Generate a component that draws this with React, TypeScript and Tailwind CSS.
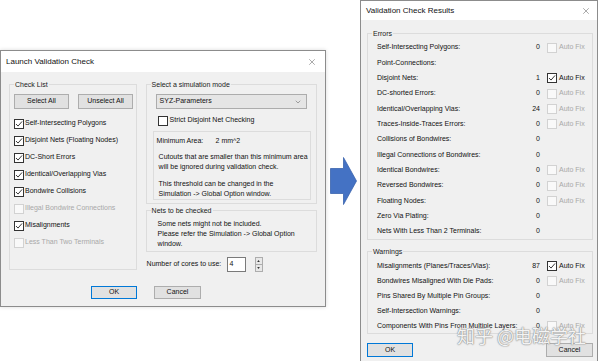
import { X, ChevronDown } from 'lucide-react';
import clsx from 'clsx';

type Box = { checked?: boolean; disabled?: boolean };

function CheckBox({ checked, disabled }: Box) {
  return (
    <span
      className={clsx(
        'flex h-[10px] w-[10px] shrink-0 items-center justify-center border',
        disabled ? 'border-[#d2d2d2] bg-[#f9f9f9]' : 'border-[#333] bg-white'
      )}
    >
      {checked && (
        <svg viewBox="0 0 10 10" className="h-[8px] w-[8px]">
          <path d="M1.2 5 L3.8 7.6 L8.8 1.8" stroke="#1b1b1b" strokeWidth="1.1" fill="none" />
        </svg>
      )}
    </span>
  );
}

function Group({ label, className, children }: { label: string; className?: string; children?: React.ReactNode }) {
  return (
    <div className={clsx('relative border border-[#dcdcdc]', className)}>
      <span className="absolute -top-[5px] left-[4px] bg-[#f0f0f0] px-[1px] text-[7px] leading-[9px] text-[#1a1a1a]">
        {label}
      </span>
      {children}
    </div>
  );
}

function Button({ label, primary, className }: { label: string; primary?: boolean; className?: string }) {
  return (
    <div
      className={clsx(
        'flex items-center justify-center bg-[#e1e1e1] text-[7px] text-[#111]',
        primary ? 'border border-[#0078d7]' : 'border border-[#adadad]',
        className
      )}
    >
      {label}
    </div>
  );
}

const checkList: [string, boolean, boolean][] = [
  ['Self-Intersecting Polygons', true, false],
  ['Disjoint Nets (Floating Nodes)', true, false],
  ['DC-Short Errors', true, false],
  ['Identical/Overlapping Vias', true, false],
  ['Bondwire Collisions', true, false],
  ['Illegal Bondwire Connections', false, true],
  ['Misalignments', true, false],
  ['Less Than Two Terminals', false, true],
];

// 0 = no auto fix, 1 = disabled auto fix, 2 = checked auto fix
const errors: [string, string, number][] = [
  ['Self-Intersecting Polygons:', '0', 1],
  ['Point-Connections:', '', 0],
  ['Disjoint Nets:', '1', 2],
  ['DC-shorted Errors:', '0', 1],
  ['Identical/Overlapping Vias:', '24', 1],
  ['Traces-Inside-Traces Errors:', '0', 1],
  ['Collisions of Bondwires:', '0', 0],
  ['Illegal Connections of Bondwires:', '0', 0],
  ['Identical Bondwires:', '0', 1],
  ['Reversed Bondwires:', '0', 1],
  ['Floating Nodes:', '0', 1],
  ['Zero Via Plating:', '0', 0],
  ['Nets With Less Than 2 Terminals:', '0', 0],
];

const warnings: [string, string, number][] = [
  ['Misalignments (Planes/Traces/Vias):', '87', 2],
  ['Bondwires Misaligned With Die Pads:', '0', 1],
  ['Pins Shared By Multiple Pin Groups:', '0', 0],
  ['Self-Intersection Warnings:', '0', 0],
  ['Components With Pins From Multiple Layers:', '0', 1],
];

function ResultRow({ row, h }: { row: [string, string, number]; h: string }) {
  const [label, count, fix] = row;
  return (
    <div className={clsx('flex items-center pl-[9px] text-[7px] text-[#111]', h)}>
      <span className="flex-1">{label}</span>
      <span className="mr-[7px]">{count}</span>
      <div className="flex w-[45px] items-center gap-[2px]">
        {fix > 0 && (
          <>
            <CheckBox checked={fix === 2} disabled={fix === 1} />
            <span className={fix === 2 ? 'text-[#111]' : 'text-[#a8a8a8]'}>Auto Fix</span>
          </>
        )}
      </div>
    </div>
  );
}

function LaunchDialog() {
  return (
    <div className="flex h-[257px] w-[326px] flex-col border border-[#8c8c8c] bg-[#f0f0f0] shadow-[0_0_4px_rgba(0,0,0,0.15)]">
      <div className="flex h-[21px] items-center justify-between bg-white pl-[5px] pr-[8px]">
        <span className="text-[8px] text-[#111]">Launch Validation Check</span>
        <X size={10} strokeWidth={1} className="text-[#333]" />
      </div>
      <div className="flex flex-1 flex-col px-[8px] pt-[12px]">
        <div className="flex gap-[9px]">
          <Group label="Check List" className="h-[186px] w-[128px] pl-[4px] pt-[9px]">
            <div className="flex gap-[9px]">
              <Button label="Select All" className="h-[15px] w-[55px]" />
              <Button label="Unselect All" className="h-[15px] w-[55px]" />
            </div>
            <div className="mt-[6px] flex flex-col">
              {checkList.map(([label, checked, disabled]) => (
                <div key={label} className="flex h-[17px] items-center gap-[1px]">
                  <CheckBox checked={checked} disabled={disabled} />
                  <span className={clsx('text-[7px]', disabled ? 'text-[#a8a8a8]' : 'text-[#111]')}>{label}</span>
                </div>
              ))}
            </div>
          </Group>

          <div className="flex w-[172px] flex-col">
            <Group label="Select a simulation mode" className="h-[120px] pt-[9px]">
              <div className="ml-[9px] flex h-[15px] w-[151px] items-center justify-between border border-[#acacac] bg-[#e5e5e5] pl-[3px] pr-[4px]">
                <span className="text-[7px] text-[#111]">SYZ-Parameters</span>
                <ChevronDown size={8} strokeWidth={1.5} className="text-[#555]" />
              </div>
              <div className="ml-[11px] mt-[6px] flex h-[11px] items-center gap-[2px]">
                <CheckBox />
                <span className="text-[7px] text-[#111]">Strict Disjoint Net Checking</span>
              </div>
              <div className="ml-[6px] mt-[5px] h-[69px] w-[158px] border border-[#dcdcdc] pl-[3px] pt-[4px] text-[7px] leading-[10px] text-[#111]">
                <div className="flex">
                  <span className="w-[59px]">Minimum Area:</span>
                  <span>2 mm^2</span>
                </div>
                <div className="ml-[2px] mt-[6px]">
                  Cutouts that are smaller than this minimum area
                  <br />
                  will be ignored during validation check.
                </div>
                <div className="ml-[2px] mt-[7px]">
                  This threshold can be changed in the
                  <br />
                  Simulation -&gt; Global Option window.
                </div>
              </div>
            </Group>
            <Group label="Nets to be checked" className="mt-[6px] h-[42px] pl-[11px] pt-[8px] text-[7px] leading-[10px] text-[#111]">
              Some nets might not be included.
              <br />
              Please refer the Simulation -&gt; Global Option
              <br />
              window.
            </Group>
            <div className="mt-[5px] flex h-[15px] items-center pl-[1px]">
              <span className="w-[80px] text-[7px] text-[#111]">Number of cores to use:</span>
              <div className="flex h-[15px] w-[19px] items-center border border-[#7a7a7a] bg-white pl-[2px] text-[7px] text-[#111]">
                4
              </div>
              <div className="ml-[9px] flex h-[15px] w-[8px] flex-col border border-[#adadad] bg-[#e8e8e8]">
                <div className="flex flex-1 items-center justify-center border-b border-[#adadad]">
                  <svg viewBox="0 0 4 3" className="h-[2px] w-[3px]">
                    <path d="M0 3 L2 0 L4 3 Z" fill="#333" />
                  </svg>
                </div>
                <div className="flex flex-1 items-center justify-center">
                  <svg viewBox="0 0 4 3" className="h-[2px] w-[3px]">
                    <path d="M0 0 L2 3 L4 0 Z" fill="#333" />
                  </svg>
                </div>
              </div>
            </div>
          </div>
        </div>
        <div className="mt-[14px] flex pl-[82px]">
          <Button label="OK" primary className="h-[13px] w-[46px]" />
          <Button label="Cancel" className="ml-[17px] h-[13px] w-[47px]" />
        </div>
      </div>
    </div>
  );
}

function ResultsDialog() {
  return (
    <div className="relative flex h-[375px] w-[238px] flex-col border border-[#8c8c8c] bg-[#f0f0f0]">
      <div className="flex h-[19px] items-center justify-between bg-white pl-[5px] pr-[6px]">
        <span className="text-[8px] text-[#111]">Validation Check Results</span>
        <X size={10} strokeWidth={1} className="text-[#333]" />
      </div>
      <div className="flex flex-col pl-[6px] pt-[13px]">
        <Group label="Errors" className="w-[226px] pt-[6px]">
          {errors.map((r) => (
            <ResultRow key={r[0]} row={r} h="h-[15.33px]" />
          ))}
        </Group>
        <Group label="Warnings" className="mt-[11px] w-[226px] pt-[6px]">
          {warnings.map((r) => (
            <ResultRow key={r[0]} row={r} h="h-[15px]" />
          ))}
        </Group>
        <div className="mt-[9px] flex w-[226px] justify-between">
          <Button label="OK" primary className="h-[14px] w-[46px]" />
          <Button label="Cancel" className="h-[14px] w-[47px]" />
        </div>
      </div>
      {/* watermark */}
      <span className="absolute left-[96px] top-[322px] font-['Noto_Sans_CJK_SC',sans-serif] text-[18px] leading-[24px] text-white/90 [text-shadow:0_0_1px_#8a8a8a,0_0_1px_#8a8a8a,0_0_2px_#aaa]">
        知乎 @电磁学社
      </span>
    </div>
  );
}

export default function App() {
  return (
    <div className="flex h-[361px] w-[600px] overflow-hidden bg-white font-['Liberation_Sans',sans-serif]">
      <div className="pt-[50px]">
        <LaunchDialog />
      </div>
      <div className="w-[34px] pl-[4px] pt-[157px]">
        <svg width="27" height="48" viewBox="0 0 27 48">
          <path d="M0.5 11.5 H13.5 V0.5 L26.5 24 L13.5 47.5 V36.5 H0.5 Z" fill="#4472c4" stroke="#3a63ad" strokeWidth="0.8" />
        </svg>
      </div>
      <ResultsDialog />
    </div>
  );
}
